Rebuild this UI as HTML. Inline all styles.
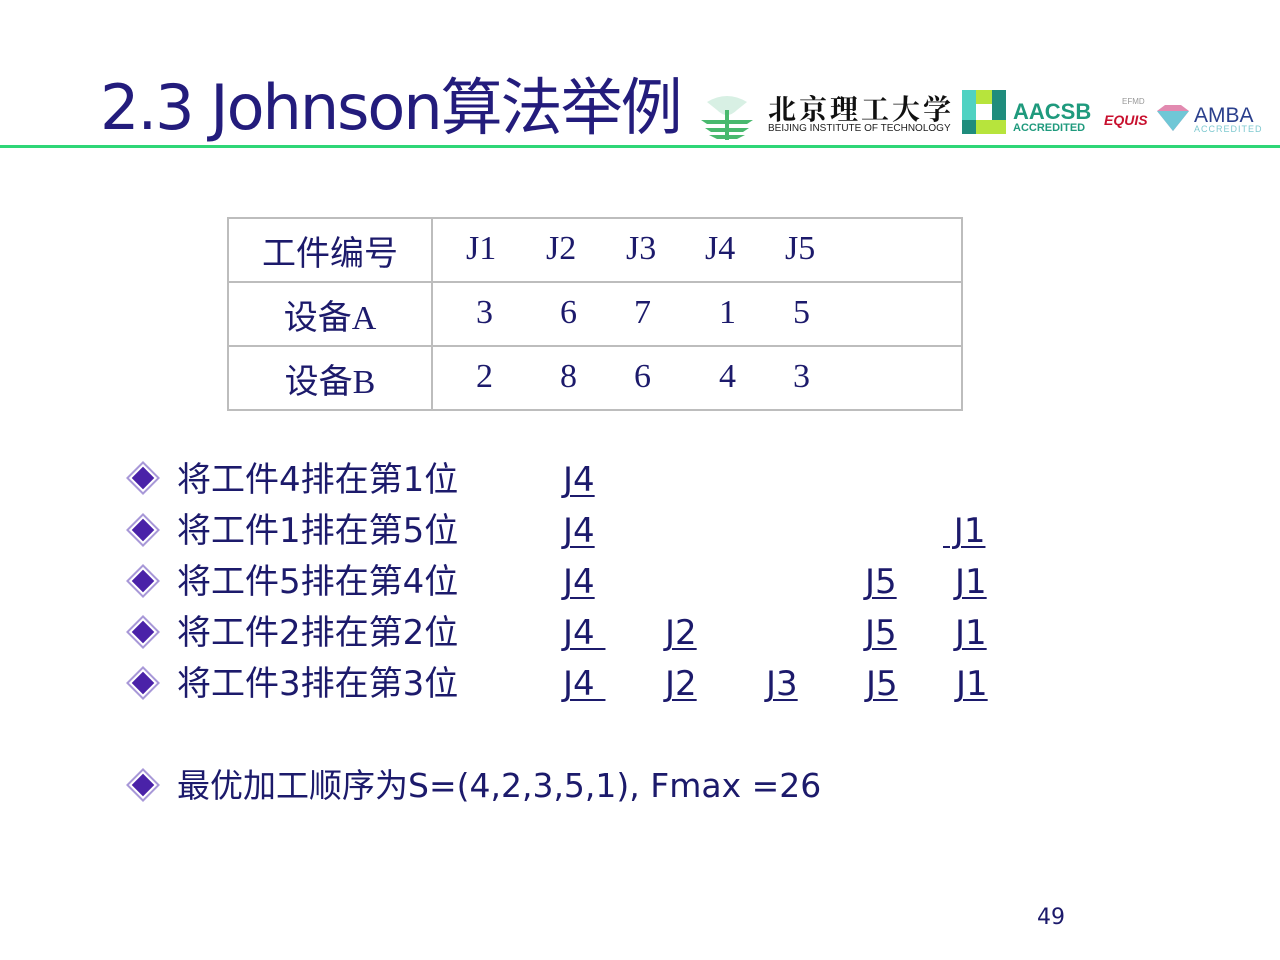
<!DOCTYPE html>
<html><head><meta charset="utf-8"><style>
body{margin:0;width:1280px;height:960px;background:#fff;position:relative;overflow:hidden;font-family:"DejaVu Sans","Noto Sans CJK SC",sans-serif;color:#1c1a6b}
.a{position:absolute;white-space:nowrap}
.t{font-size:62px;color:#231c7c;left:100px;top:70px;line-height:76px;font-family:"DejaVu Sans","Noto Sans CJK SC",sans-serif;letter-spacing:-2px}
.ln{left:0;top:145px;width:1280px;height:3px;background:#2fd677}
table{position:absolute;left:227px;top:217px;border-collapse:collapse;width:736px;font-family:"Liberation Serif","Noto Serif CJK SC",serif;font-size:34px;color:#1c1a6b}
td{border:2px solid #bdbdbd;height:62px;padding:0}
.r{font-size:34px;line-height:52px}
.d{width:16px;height:16px;transform:rotate(45deg);background:#4a22a8;outline:2px solid #fff;box-shadow:0 0 0 4px #a898d8}
u{text-decoration-thickness:2px;text-underline-offset:4px}
</style></head><body>
<div class="a t">2.3 Johnson算法举例</div>
<svg class="a" style="left:697px;top:80px" width="60" height="60"><path d="M10 22 Q30 10 50 22 L40 30 Q30 40 20 30Z" fill="#d8f0e4"/><path d="M4 40 H56 L50 44 H10Z M8 48 H52 L46 52 H14Z M12 55 H48 L40 59 H20Z" fill="#49b96e"/><rect x="28" y="30" width="4" height="30" fill="#49b96e"/></svg>
<div class="a" style="left:768px;top:88px;font-size:28px;font-weight:bold;font-family:'Noto Serif CJK SC',serif;letter-spacing:3px;color:#111">北京理工大学</div>
<div class="a" style="left:768px;top:123px;font-size:10px;font-family:'Liberation Sans';color:#222">BEIJING INSTITUTE OF TECHNOLOGY</div>
<svg class="a" style="left:962px;top:90px" width="44" height="44"><rect width="44" height="44" fill="#b7e43c"/><rect width="14" height="44" fill="#4fd2c2"/><rect x="30" width="14" height="30" fill="#1f8c7c"/><rect y="30" width="14" height="14" fill="#1f8c7c"/><rect x="14" y="14" width="16" height="16" fill="#fff"/></svg>
<div class="a" style="left:1013px;top:99px;font-size:22px;font-weight:bold;font-family:'Liberation Sans';color:#1f9a7d">AACSB</div>
<div class="a" style="left:1013px;top:122px;font-size:11px;font-weight:bold;font-family:'Liberation Sans';color:#1f9a7d">ACCREDITED</div>
<div class="a" style="left:1122px;top:97px;font-size:8px;font-family:'Liberation Sans';color:#999">EFMD</div>
<div class="a" style="left:1104px;top:112px;font-size:14px;font-weight:bold;font-style:italic;font-family:'Liberation Sans';color:#c8102e">EQUIS</div>
<svg class="a" style="left:1155px;top:103px" width="36" height="30"><path d="M2 8 L10 2 H26 L34 8 L18 28Z" fill="#e28ab0"/><path d="M2 8 H34 L18 28Z" fill="#6fc7d6"/></svg>
<div class="a" style="left:1194px;top:104px;font-size:21px;font-family:'Liberation Sans';color:#2a3f8c">AMBA</div>
<div class="a" style="left:1194px;top:124px;font-size:9px;font-family:'Liberation Sans';color:#7fc9d0;letter-spacing:1px">ACCREDITED</div>
<div class="a ln"></div>
<table>
<tr><td style="width:202px;text-align:center;font-family:'Noto Sans CJK SC',sans-serif;font-size:34px">工件编号</td><td><span class="a" style="left:238px;top:12px">J1</span><span class="a" style="left:318px;top:12px">J2</span><span class="a" style="left:398px;top:12px">J3</span><span class="a" style="left:477px;top:12px">J4</span><span class="a" style="left:557px;top:12px">J5</span></td></tr>
<tr><td style="text-align:center"><span style="font-family:'Noto Sans CJK SC';">设备</span>A</td><td><span class="a" style="left:248px;top:76px">3</span><span class="a" style="left:332px;top:76px">6</span><span class="a" style="left:406px;top:76px">7</span><span class="a" style="left:491px;top:76px">1</span><span class="a" style="left:565px;top:76px">5</span></td></tr>
<tr><td style="text-align:center"><span style="font-family:'Noto Sans CJK SC';">设备</span>B</td><td><span class="a" style="left:248px;top:140px">2</span><span class="a" style="left:332px;top:140px">8</span><span class="a" style="left:406px;top:140px">6</span><span class="a" style="left:491px;top:140px">4</span><span class="a" style="left:565px;top:140px">3</span></td></tr>
</table>
<div class="a d" style="left:135px;top:470px"></div><div class="a r" style="left:177px;top:454px">将工件4排在第1位</div><div class="a r" style="left:563px;top:454px"><u>J4</u></div>
<div class="a d" style="left:135px;top:522px"></div><div class="a r" style="left:177px;top:505px">将工件1排在第5位</div><div class="a r" style="left:563px;top:505px"><u>J4</u></div><div class="a r" style="left:943px;top:505px"><u>&nbsp;J1</u></div>
<div class="a d" style="left:135px;top:573px"></div><div class="a r" style="left:177px;top:556px">将工件5排在第4位</div><div class="a r" style="left:563px;top:556px"><u>J4</u></div><div class="a r" style="left:865px;top:556px"><u>J5</u></div><div class="a r" style="left:955px;top:556px"><u>J1</u></div>
<div class="a d" style="left:135px;top:624px"></div><div class="a r" style="left:177px;top:607px">将工件2排在第2位</div><div class="a r" style="left:563px;top:607px"><u>J4&nbsp;</u></div><div class="a r" style="left:665px;top:607px"><u>J2</u></div><div class="a r" style="left:865px;top:607px"><u>J5</u></div><div class="a r" style="left:955px;top:607px"><u>J1</u></div>
<div class="a d" style="left:135px;top:675px"></div><div class="a r" style="left:177px;top:658px">将工件3排在第3位</div><div class="a r" style="left:563px;top:658px"><u>J4&nbsp;</u></div><div class="a r" style="left:665px;top:658px"><u>J2</u></div><div class="a r" style="left:766px;top:658px"><u>J3</u></div><div class="a r" style="left:866px;top:658px"><u>J5</u></div><div class="a r" style="left:956px;top:658px"><u>J1</u></div>
<div class="a d" style="left:135px;top:777px"></div><div class="a r" style="left:177px;top:760px;font-size:33px">最优加工顺序为S=(4,2,3,5,1), Fmax =26</div>
<div class="a" style="left:1037px;top:905px;font-size:22px">49</div>
</body></html>
